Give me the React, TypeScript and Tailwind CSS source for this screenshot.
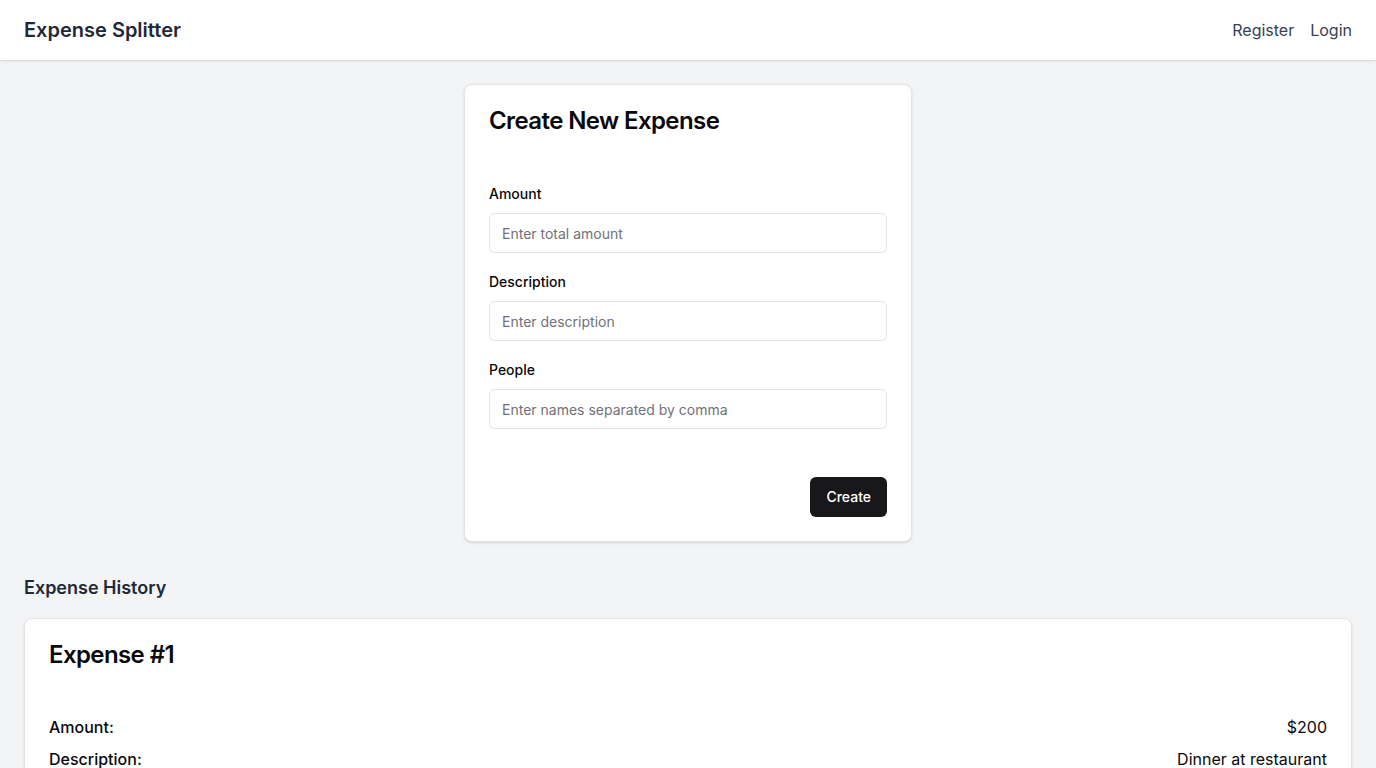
import { useState } from 'react';

type Expense = {
  id: number;
  amount: number;
  description: string;
  people: string[];
};

const initialExpenses: Expense[] = [
  { id: 1, amount: 200, description: 'Dinner at restaurant', people: ['Alice', 'Bob', 'Charlie', 'Dana'] },
];

function Field({ label, placeholder, value, onChange }: { label: string; placeholder: string; value: string; onChange: (v: string) => void }) {
  return (
    <div className="mb-[22px] last:mb-0">
      <label className="block text-sm font-medium leading-none text-[#09090b] mb-3">{label}</label>
      <input
        value={value}
        onChange={(e) => onChange(e.target.value)}
        placeholder={placeholder}
        className="block w-full h-10 rounded-md border border-[#e4e4e7] bg-white px-3 text-sm text-[#09090b] placeholder:text-[#71717a] focus:outline-none"
      />
    </div>
  );
}

export default function App() {
  const [amount, setAmount] = useState('');
  const [description, setDescription] = useState('');
  const [people, setPeople] = useState('');
  const [expenses, setExpenses] = useState<Expense[]>(initialExpenses);

  const handleCreate = () => {
    if (!amount) return;
    setExpenses((prev) => [
      ...prev,
      {
        id: prev.length + 1,
        amount: Number(amount),
        description,
        people: people.split(',').map((p) => p.trim()).filter(Boolean),
      },
    ]);
    setAmount('');
    setDescription('');
    setPeople('');
  };

  return (
    <div className="min-h-screen bg-[#f3f4f6] font-['Inter',sans-serif]">
      {/* Navbar */}
      <nav className="h-[60px] bg-white shadow flex items-center justify-between px-6">
        <h1 className="text-xl font-semibold text-[#1f2937]">Expense Splitter</h1>
        <div className="flex items-center gap-4 text-base text-[#374151]">
          <a href="#">Register</a>
          <a href="#">Login</a>
        </div>
      </nav>

      <main className="p-6">
        {/* Create form */}
        <div className="mx-auto w-[448px] rounded-lg border border-[#e4e4e7] bg-white shadow-sm p-6">
          <h2 className="text-2xl font-semibold leading-none tracking-tight text-[#09090b] mb-[54px]">Create New Expense</h2>
          <Field label="Amount" placeholder="Enter total amount" value={amount} onChange={setAmount} />
          <Field label="Description" placeholder="Enter description" value={description} onChange={setDescription} />
          <Field label="People" placeholder="Enter names separated by comma" value={people} onChange={setPeople} />
          <div className="flex justify-end mt-12">
            <button
              onClick={handleCreate}
              className="h-10 px-4 rounded-md bg-[#18181b] text-white text-sm font-medium"
            >
              Create
            </button>
          </div>
        </div>

        {/* History */}
        <h3 className="mt-8 mb-4 text-lg font-semibold text-[#1f2937]">Expense History</h3>
        <div className="space-y-4">
          {expenses.map((exp) => (
            <div key={exp.id} className="rounded-lg border border-[#e4e4e7] bg-white shadow-sm p-6">
              <h4 className="text-2xl font-semibold leading-none tracking-tight text-[#09090b] mb-12">Expense #{exp.id}</h4>
              <div className="space-y-2 text-base text-[#09090b]">
                <div className="flex justify-between">
                  <span className="font-medium">Amount:</span>
                  <span>${exp.amount}</span>
                </div>
                <div className="flex justify-between">
                  <span className="font-medium">Description:</span>
                  <span>{exp.description}</span>
                </div>
                <div className="flex justify-between">
                  <span className="font-medium">People:</span>
                  <span>{exp.people.join(', ')}</span>
                </div>
                <div className="flex justify-between">
                  <span className="font-medium">Per person:</span>
                  <span>${(exp.amount / Math.max(exp.people.length, 1)).toFixed(2)}</span>
                </div>
              </div>
            </div>
          ))}
        </div>
      </main>
    </div>
  );
}
